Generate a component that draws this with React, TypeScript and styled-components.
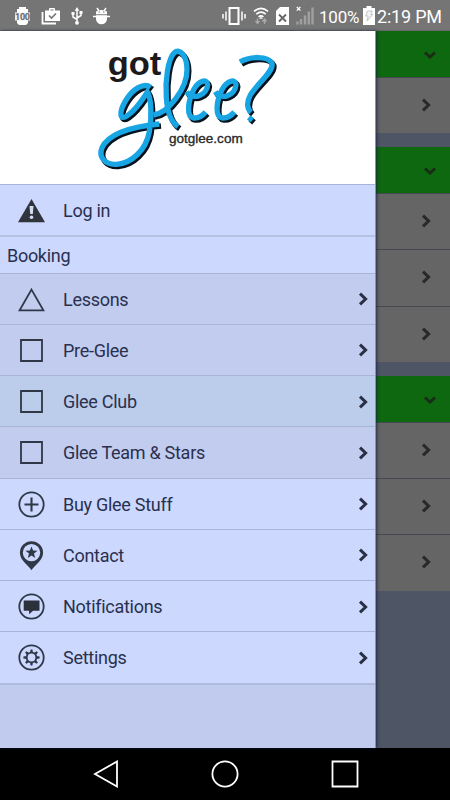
import React from "react";
import styled, { createGlobalStyle } from "styled-components";

const Global = createGlobalStyle`
  * { box-sizing: border-box; }
  body { margin: 0; background: #000; font-family: Roboto, "Noto Sans", sans-serif; }
  svg { display: block; flex: none; }
`;

const Screen = styled.div`
  display: flex;
  flex-direction: column;
  width: 450px;
  height: 800px;
  overflow: hidden;
`;

const StatusBar = styled.header`
  display: flex;
  align-items: center;
  height: 31px;
  flex: none;
  padding: 1px 9px 0 14px;
  background: #757575;
  border-bottom: 1px solid #696969;
  color: #fff;
`;

const StatusGroup = styled.div<{ $gap: number; $push?: boolean }>`
  display: flex;
  align-items: center;
  gap: ${(p) => p.$gap}px;
  margin-left: ${(p) => (p.$push ? "auto" : "0")};
`;

const StatusText = styled.span<{ $size: number; $width: number; $inset?: number }>`
  font-size: ${(p) => p.$size}px;
  line-height: 24px;
  width: ${(p) => p.$width}px;
  letter-spacing: -0.2px;
  white-space: nowrap;
  padding: 2px 0 0 ${(p) => p.$inset ?? 0}px;
`;

const Body = styled.main`
  position: relative;
  height: 717px;
  flex: none;
  background: #4e5666;
`;

const Page = styled.div`
  display: flex;
  flex-direction: column;
  gap: 13.6px;
`;

const Group = styled.section`
  display: flex;
  flex-direction: column;
`;

const GroupHeader = styled.div`
  display: flex;
  align-items: center;
  justify-content: flex-end;
  height: 46px;
  padding: 2px 13px 0 0;
  background: #0d680f;
`;

const GroupRow = styled.div`
  display: flex;
  align-items: center;
  justify-content: flex-end;
  height: 56.35px;
  padding: 0 18px 1px 0;
  background: #656565;
  border-top: 1px solid #454950;
`;

const Drawer = styled.aside`
  position: absolute;
  top: 0;
  left: 0;
  bottom: 0;
  width: 376px;
  display: flex;
  flex-direction: column;
  background: #c1cbed;
  border-right: 1px solid #8792b3;
  box-shadow: 1px 0 3px rgba(20, 30, 65, 0.75);
`;

const Brand = styled.div`
  height: 153px;
  flex: none;
  padding: 4px 0 0 90px;
  background: #fff;
`;

const Section = styled.div`
  height: 37.3px;
  flex: none;
  padding: 1px 7px 0;
  border-top: 2px solid #b5c2e3;
  background: #ccd8fe;
  color: #29304f;
  font-size: 18px;
  letter-spacing: -0.3px;
  line-height: 35px;
`;

const Item = styled.div<{ $tone: "light" | "sub" | "active" }>`
  display: flex;
  align-items: center;
  height: 51.25px;
  flex: none;
  padding: 1px 6px 0 17px;
  border-top: 1px solid #a9b5d6;
  background: ${(p) => ({ light: "#ccd8fe", sub: "#c2ccee", active: "#bccceb" })[p.$tone]};
  color: #29304f;
`;

const Label = styled.span`
  flex: 1;
  padding: 1px 0 0 17px;
  font-size: 18px;
  letter-spacing: -0.28px;
  line-height: 24px;
`;

const DrawerEnd = styled.div`
  flex: 1;
  border-top: 2px solid #b0bcdd;
`;

const NavBar = styled.nav`
  display: flex;
  align-items: center;
  justify-content: space-between;
  height: 52px;
  flex: none;
  padding: 0 91px 0 92px;
  background: #000;
`;

type ChevronProps = { down?: boolean; color?: string };
const Chevron = ({ down, color = "#2a3044" }: ChevronProps) => (
  <svg width={down ? 14 : 11} height={down ? 10 : 14} viewBox={down ? "0 0 14 10" : "0 0 11 14"}>
    <path
      d={down ? "M2 2.5l5 4.5 5-4.5" : "M2 1.6L7.6 7 2 12.4"}
      fill="none" stroke={color} strokeWidth="3"
    />
  </svg>
);

type IconName = "warning" | "triangle" | "square" | "plus" | "pin" | "chat" | "gear";

const ink = "#303747";

const drawings: Record<IconName, React.ReactNode> = {
  warning: (
    <>
      <path d="M14.5 3L28 26.3H1z" fill="#30343c" />
      <path d="M12.5 10h4l-.7 8h-2.6z" fill="#d4dcf4" />
      <circle cx="14.5" cy="21.3" r="1.8" fill="#d4dcf4" />
    </>
  ),
  triangle: <path d="M14.5 4.6L26.4 25.3H2.6z" fill="none" stroke={ink} strokeWidth="1.8" />,
  square: <path d="M4 4h21v21H4z" fill="none" stroke={ink} strokeWidth="1.8" />,
  plus: (
    <>
      <circle cx="14.5" cy="14.5" r="12.2" fill="none" stroke={ink} strokeWidth="1.8" />
      <path d="M14.5 7.5v14M7.5 14.5h14" stroke={ink} strokeWidth="2.1" />
    </>
  ),
  pin: (
    <>
      <path d="M14.5 29.2C12 25 2.9 19.5 2.9 11.8a11.6 11.6 0 0 1 23.2 0C26.1 19.5 17 25 14.5 29.2z" fill={ink} />
      <circle cx="14.5" cy="11.6" r="8.7" fill="#ccd8fe" />
      <path d="M14.5 5.4l1.6 4.2 4.4.2-3.5 2.8 1.2 4.3-3.7-2.4-3.7 2.4 1.2-4.3-3.5-2.8 4.4-.2z" fill={ink} />
    </>
  ),
  chat: (
    <>
      <circle cx="14.5" cy="14.5" r="12.2" fill="none" stroke={ink} strokeWidth="1.8" />
      <path d="M6.7 8.6h15.8v10.2h-6.4l-4 3.4v-3.4H6.7z" fill="#2b303a" />
    </>
  ),
  gear: (
    <>
      <circle cx="14.5" cy="14.5" r="12.2" fill="none" stroke={ink} strokeWidth="1.8" />
      <circle cx="14.5" cy="14.5" r="4.8" fill="none" stroke={ink} strokeWidth="1.8" />
      {[0, 45, 90, 135, 180, 225, 270, 315].map((a) => (
        <path key={a} d="M13 9.8l.6-3.4h1.8l.6 3.4z" fill={ink} transform={`rotate(${a} 14.5 14.5)`} />
      ))}
    </>
  ),
};

const Icon = ({ name }: { name: IconName }) => (
  <svg width="29" height="29" viewBox="0 0 29 29" overflow="visible">{drawings[name]}</svg>
);

const script = [
  "M182 157C161 141 128 163 108 195C86 231 88 259 112 242C141 222 158 192 172 171C184 188 186 245 178 290C168 345 125 385 80 388C44 390 25 365 36 338C54 300 115 276 208 267",
  "M190 240C234 235 292 160 291 103C291 65 270 38 253 53C234 72 225 135 229 188C232 235 245 262 264 275",
  "M290 170C306 198 352 181 353 149C352 130 326 137 312 162C293 198 288 246 311 249C325 250 338 242 347 231",
  "M376 170C392 198 437 181 438 149C437 130 411 137 397 162C378 198 374 246 397 249C411 250 424 242 433 231",
  "M450 81C477 64 535 61 546 85C552 110 501 146 481 180C469 202 471 222 483 232",
  "M476 247L487 256",
];

const Logo = () => (
  <svg width="200" height="149" viewBox="0 0 600 447" fill="none">
    <text x="53" y="121" fill="#1c1a1b" fontFamily="Liberation Sans, sans-serif" fontWeight="700" fontSize="100" textLength="161" lengthAdjust="spacingAndGlyphs">got</text>
    <g stroke="#07131c" strokeWidth="17" transform="translate(5 6)">
      {script.map((d) => <path key={d} d={d} />)}
    </g>
    <g stroke="#18a5e4" strokeWidth="16">
      {script.map((d) => <path key={d} d={d} />)}
    </g>
    <text x="237" y="323" fill="#2a2a2a" stroke="#2a2a2a" strokeWidth="1" fontFamily="Liberation Sans, sans-serif" fontSize="36" textLength="221" lengthAdjust="spacingAndGlyphs">gotglee.com</text>
  </svg>
);

const BatteryLevel = () => (
  <svg width="17" height="20" viewBox="0 0 17 20">
    <path d="M5 1h7v2h2v14l-2 2H5l-2-2V3h2z" fill="#fff" />
    <path d="M1 6.5h15v8H1z" fill="#eee" />
    <text x="1" y="14" fontFamily="Roboto, sans-serif" fontWeight="700" fontSize="9" fill="#666" textLength="15">100</text>
  </svg>
);

const Briefcase = () => (
  <svg width="20" height="18" viewBox="0 0 20 18">
    <path d="M1.5 5v11.5H15" fill="none" stroke="#fff" strokeWidth="1.8" />
    <path d="M4 3.5h4V2q0-1 1-1h4q1 0 1 1v1.5h5V14H4zM9.5 3.5h3v-1h-3z" fill="#fff" fillRule="evenodd" />
    <path d="M8 8.5l2.5 2.6L15 6.5" fill="none" stroke="#757575" strokeWidth="1.6" />
  </svg>
);

const Usb = () => (
  <svg width="12" height="18" viewBox="0 0 12 18">
    <path d="M6 3v12M6 12.5L2 10V7M6 11l4-2.5V6" fill="none" stroke="#fff" strokeWidth="1.5" />
    <path d="M6 0l2.3 3.7H3.7zM.5 5h3v3h-3zM8.5 4h3v3h-3z" fill="#fff" />
    <circle cx="6" cy="15.8" r="1.9" fill="#fff" />
  </svg>
);

const Robot = () => (
  <svg width="17" height="18" viewBox="0 0 17 18">
    <path d="M4 1l2 3M13 1l-2 3M0 9.5h17" stroke="#fff" strokeWidth="1.5" />
    <path d="M3 7.2V4.5q5.5-3 11 0v2.7zM3 8.3h11V12a5.5 5.2 0 0 1-11 0z" fill="#fff" />
    <path d="M5.5 5H7M10 5h1.5" stroke="#757575" />
  </svg>
);

const Vibrate = () => (
  <svg width="24" height="20" viewBox="0 0 24 20">
    <path d="M7.5 2h9v16h-9z" fill="none" stroke="#fff" strokeWidth="2" />
    <path d="M4 5.5v9M1 8v4.5M20 5.5v9M23 8v4.5" stroke="#fff" strokeWidth="1.5" />
  </svg>
);

const Wifi = () => (
  <svg width="16" height="19" viewBox="0 0 16 19">
    <path d="M1 5.4q7-6 14 0M3.3 8.2q4.7-4 9.4 0M5.6 10.8q2.4-2 4.8 0" fill="none" stroke="#fff" strokeWidth="1.6" />
    <path d="M8 10.8l2 2H6z" fill="#fff" />
    <path d="M4.5 12.5v5m-2-2.5l2 2.5 2-2.5M11.5 18v-5m-2 2.5l2-2.5 2 2.5" fill="none" stroke="#aaa" strokeWidth="1.4" />
  </svg>
);

const NoSim = () => (
  <svg width="13" height="18" viewBox="0 0 13 18">
    <path d="M4 0h9v18H0V4z" fill="#fff" />
    <path d="M3 7.5l7 7M10 7.5l-7 7" stroke="#666" strokeWidth="1.8" />
  </svg>
);

const Signal = () => (
  <svg width="18" height="20" viewBox="0 0 18 20">
    <path d="M1.5 18.5v-3M5 18.5v-5.5M9 18.5v-9M12.8 18.5V5.5M16.5 18.5V1.5" stroke="#a0a0a0" strokeWidth="2.4" />
    <path d="M.8 1l3.6 3.6M4.4 1L.8 4.6" stroke="#fff" strokeWidth="1.3" />
  </svg>
);

const Charging = () => (
  <svg width="12" height="19" viewBox="0 0 12 19">
    <path d="M3.5 0h5v2H12v17H0V2h3.5z" fill="#fff" />
    <path d="M4.5 5h4.8L7.8 8.5h2L4 15l1.2-5H2.7z" fill="#f5f5f5" stroke="#bdbdbd" strokeWidth=".9" />
  </svg>
);

const groups = [1, 3, 3];

const booking: { icon: IconName; label: string; tone: "light" | "sub" | "active" }[] = [
  { icon: "triangle", label: "Lessons", tone: "sub" },
  { icon: "square", label: "Pre-Glee", tone: "sub" },
  { icon: "square", label: "Glee Club", tone: "active" },
  { icon: "square", label: "Glee Team & Stars", tone: "sub" },
  { icon: "plus", label: "Buy Glee Stuff", tone: "light" },
  { icon: "pin", label: "Contact", tone: "light" },
  { icon: "chat", label: "Notifications", tone: "light" },
  { icon: "gear", label: "Settings", tone: "light" },
];

export default function App() {
  return (
    <>
      <Global />
      <Screen>
        <StatusBar>
          <StatusGroup $gap={10}>
            <BatteryLevel />
            <Briefcase />
            <Usb />
            <Robot />
          </StatusGroup>
          <StatusGroup $gap={7} $push>
            <Vibrate />
            <Wifi />
            <NoSim />
            <Signal />
          </StatusGroup>
          <StatusGroup $gap={2}>
            <StatusText $size={17} $width={47} $inset={5}>100%</StatusText>
            <Charging />
            <StatusText $size={18} $width={64}>2:19 PM</StatusText>
          </StatusGroup>
        </StatusBar>
        <Body>
          <Page>
            {groups.map((count, g) => (
              <Group key={g}>
                <GroupHeader><Chevron down color="#1b2c17" /></GroupHeader>
                {Array.from({ length: count }, (_, i) => (
                  <GroupRow key={i}><Chevron color="#292929" /></GroupRow>
                ))}
              </Group>
            ))}
          </Page>
          <Drawer>
            <Brand><Logo /></Brand>
            <Item $tone="light"><Icon name="warning" /><Label>Log in</Label></Item>
            <Section>Booking</Section>
            {booking.map((item) => (
              <Item key={item.label} $tone={item.tone}>
                <Icon name={item.icon} />
                <Label>{item.label}</Label>
                <Chevron />
              </Item>
            ))}
            <DrawerEnd />
          </Drawer>
        </Body>
        <NavBar>
          <svg width="26" height="28" viewBox="0 0 26 28"><path d="M25 1.5v25L3 14z" fill="none" stroke="#fff" strokeWidth="1.8" /></svg>
          <svg width="28" height="28" viewBox="0 0 28 28"><circle cx="14" cy="14" r="12.6" fill="none" stroke="#fff" strokeWidth="1.8" /></svg>
          <svg width="28" height="28" viewBox="0 0 28 28"><path d="M1.5 1.5h25v25h-25z" fill="none" stroke="#fff" strokeWidth="1.8" /></svg>
        </NavBar>
      </Screen>
    </>
  );
}
